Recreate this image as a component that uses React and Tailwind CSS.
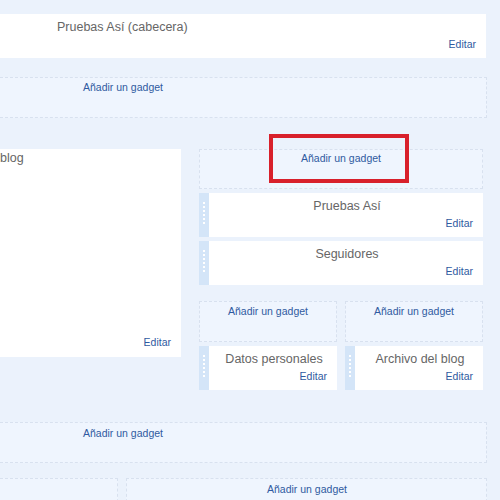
import React from "react";

const font = { fontFamily: '"Liberation Sans", Arial, sans-serif' };

// dashed "add gadget" drop zone
const AddGadget = ({ className = "", textClass = "text-center" }) => (
	<div className={`border border-dashed border-[#d8e1ef] bg-[#eff5fe] ${className}`}>
		<div className={`text-[10.5px] leading-[14px] text-[#2f5aa0] ${textClass}`}>
			Añadir un gadget
		</div>
	</div>
);

const Handle = () => (
	<div className="w-[10px] bg-[#d4e5f8] flex flex-col items-center justify-center gap-[2px] pb-[4px]">
		{[0, 1, 2, 3, 4, 5].map((i) => (
			<div key={i} className="w-[2px] h-[2px] bg-white" />
		))}
	</div>
);

// gadget with drag handle on the left
const Gadget = ({ title, className = "" }) => (
	<div className={`flex h-[44px] ${className}`}>
		<Handle />
		<div className="flex-1 bg-white flex flex-col pt-[5px] pr-[10px]">
			<div className="pl-[12px] text-center text-[12.5px] leading-[16px] text-[#666]">
				{title}
			</div>
			<div className="mt-[2px] text-right text-[10.5px] leading-[14px] text-[#2f5aa0]">
				Editar
			</div>
		</div>
	</div>
);

const App = () => {
	return (
		<div
			className="relative w-[500px] h-[500px] overflow-hidden bg-[#ebf2fc] pt-[14px]"
			style={font}>
			{/* Header */}
			<div className="w-[486px] h-[44px] bg-white pt-[5px] pr-[10px]">
				<div className="pl-[57px] text-[12.5px] leading-[16px] text-[#666]">
					Pruebas Así (cabecera)
				</div>
				<div className="mt-[2px] text-right text-[10.5px] leading-[14px] text-[#2f5aa0]">
					Editar
				</div>
			</div>

			<AddGadget
				className="mt-[19px] w-[487px] h-[41px] pt-[2px] border-l-0"
				textClass="pl-[83px]"
			/>

			{/* Main row */}
			<div className="mt-[31px] flex">
				<div className="w-[181px] h-[208px] bg-white flex flex-col pt-[1px] pr-[10px]">
					<div className="text-[12.5px] leading-[16px] text-[#666]">blog</div>
					<div className="mt-auto mb-[8px] text-right text-[10.5px] leading-[14px] text-[#2f5aa0]">
						Editar
					</div>
				</div>

				<div className="ml-[18px] w-[284px] flex flex-col">
					<AddGadget className="h-[40px] pt-[1px]" />
					<Gadget title="Pruebas Así" className="mt-[4px]" />
					<Gadget title="Seguidores" className="mt-[4px]" />

					<div className="mt-[16px] flex gap-[8px]">
						<div className="w-[138px] flex flex-col">
							<AddGadget className="h-[41px] pt-[2px]" />
							<Gadget title="Datos personales" className="mt-[4px]" />
						</div>
						<div className="w-[138px] flex flex-col">
							<AddGadget className="h-[41px] pt-[2px]" />
							<Gadget title="Archivo del blog" className="mt-[4px]" />
						</div>
					</div>
				</div>
			</div>

			<AddGadget
				className="mt-[32px] w-[487px] h-[41px] pt-[3px] border-l-0"
				textClass="pl-[83px]"
			/>

			<div className="mt-[15px] flex gap-[8px]">
				<div className="w-[118px] h-[40px] border border-dashed border-l-0 border-[#d8e1ef] bg-[#eff5fe]" />
				<AddGadget
					className="w-[361px] h-[40px] pt-[3px]"
					textClass="pl-[140px]"
				/>
			</div>

			{/* highlight marker */}
			<div className="absolute left-[269px] top-[134px] w-[140px] h-[49px] border-4 border-[#d8202b]" />
		</div>
	);
};

export default App;
